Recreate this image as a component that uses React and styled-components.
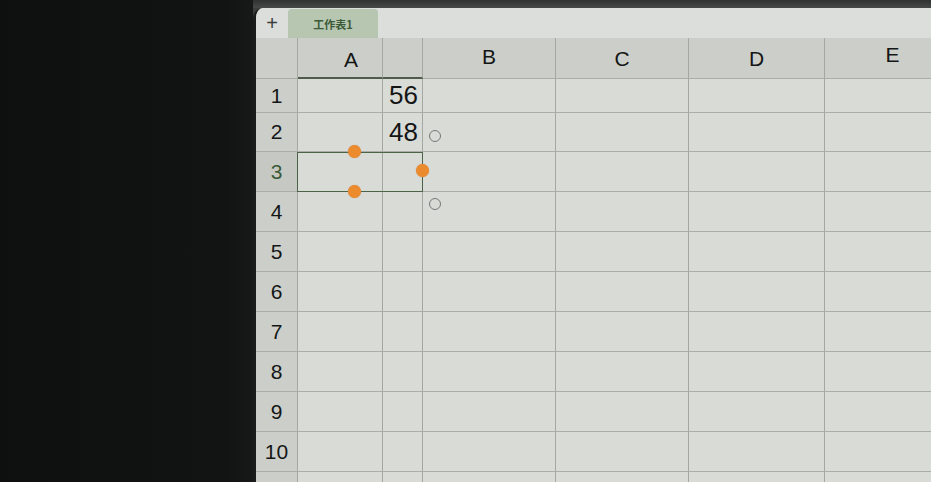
import React from "react";
import styled, { createGlobalStyle } from "styled-components";

const Global = createGlobalStyle`
  html, body { margin: 0; padding: 0; background: #101211; }
  body { font-family: "Liberation Sans", Arial, sans-serif; overflow: hidden; }
`;

const Page = styled.div`
  width: 931px;
  height: 482px;
  display: flex;
  background: #101211;
  overflow: hidden;
`;

const Bezel = styled.div`
  width: 253px;
  flex: none;
  background: linear-gradient(90deg, #0e100f 0%, #121413 90%, #171918 100%);
`;

const Device = styled.div`
  flex: 1;
  display: flex;
  flex-direction: column;
  background: #3a3d3b;
  min-width: 0;
`;

const TopStrip = styled.div`
  height: 8px;
  flex: none;
  background: linear-gradient(180deg, #2f3230 0%, #464947 100%);
`;

const Screen = styled.div`
  flex: 1;
  display: flex;
  flex-direction: column;
  background: #d9dbd7;
  border-top-left-radius: 10px;
  overflow: hidden;
  border-left: 3px solid #1a1c1b;
`;

const TabBar = styled.div`
  height: 29px;
  flex: none;
  display: flex;
  align-items: stretch;
  background: #dcdedb;
  padding-top: 1px;
`;

const AddButton = styled.div`
  width: 32px;
  display: flex;
  align-items: center;
  justify-content: center;
  font-size: 20px;
  color: #3b3d3c;
`;

const Tab = styled.div`
  width: 90px;
  display: flex;
  align-items: center;
  justify-content: center;
  background: #b6c6b1;
  border-radius: 4px 4px 0 0;
  color: #3c5a38;
  font-size: 11px;
  font-weight: 700;
  font-family: "Noto Sans CJK SC", "Liberation Sans", sans-serif;
`;

const GridWrap = styled.div`
  position: relative;
  flex: 1;
`;

const Grid = styled.div`
  display: grid;
  grid-template-columns: 42px 85px 40px 133px 133px 136px 136px;
  grid-template-rows: 41px 34px 39px repeat(9, 40px);
`;

const Cell = styled.div`
  border-right: 1.5px solid #a5a7a3;
  border-bottom: 1.5px solid #abada9;
  background: ${(p) => (p.$head ? "#ccceca" : "#d9dbd7")};
  display: flex;
  align-items: center;
  justify-content: ${(p) => (p.$right ? "flex-end" : "center")};
  padding: ${(p) => p.$pad || "0"};
  font-size: ${(p) => (p.$num ? "26px" : "21px")};
  color: ${(p) => (p.$active ? "#3b5a37" : "#141615")};
  box-sizing: border-box;
  ${(p) => (p.$mark ? "border-bottom: 2px solid #4f5c4c;" : "")}
  ${(p) => (p.$activeRow ? "background: #c6c8c4;" : "")}
`;

const Selection = styled.div`
  position: absolute;
  left: 41px;
  top: 114px;
  width: 126px;
  height: 40px;
  border: 1.5px solid #4c6348;
  box-sizing: border-box;
  pointer-events: none;
`;

const Handle = styled.div`
  position: absolute;
  width: 13px;
  height: 13px;
  border-radius: 50%;
  background: #ec8a2e;
  box-shadow: 0 0 1px rgba(180, 90, 20, 0.6);
  left: ${(p) => p.$x - 6.5}px;
  top: ${(p) => p.$y - 6.5}px;
`;

const Ring = styled.div`
  position: absolute;
  width: 10px;
  height: 10px;
  border-radius: 50%;
  border: 1.5px solid #757875;
  left: ${(p) => p.$x - 6.5}px;
  top: ${(p) => p.$y - 6.5}px;
`;

const cols = ["A", "", "B", "C", "D", "E"];
const data = { 1: "56", 2: "48" };

export default function App() {
  const rows = [1, 2, 3, 4, 5, 6, 7, 8, 9, 10, 11];
  return (
    <Page>
      <Global />
      <Bezel />
      <Device>
        <TopStrip />
        <Screen>
          <TabBar>
            <AddButton>+</AddButton>
            <Tab>工作表1</Tab>
          </TabBar>
          <GridWrap>
            <Grid>
              <Cell $head />
              {cols.map((c, i) => (
                <Cell
                  key={i}
                  $head
                  $mark={i < 2}
                  $pad={i === 0 ? "4px 0 0 22px" : i === 2 ? "0 0 2px 0" : i === 5 ? "0 0 6px 0" : "2px 0 0 0"}
                >
                  {c}
                </Cell>
              ))}
              {rows.map((r) => (
                <React.Fragment key={r}>
                  <Cell $head $active={r === 3} $activeRow={r === 3}>
                    {r <= 10 ? r : ""}
                  </Cell>
                  <Cell />
                  <Cell $right $num $pad="0 4px 0 0">
                    {data[r] || ""}
                  </Cell>
                  <Cell />
                  <Cell />
                  <Cell />
                  <Cell />
                </React.Fragment>
              ))}
            </Grid>
            <Selection />
            <Handle $x={98} $y={113} />
            <Handle $x={98} $y={153} />
            <Handle $x={166} $y={132} />
            <Ring $x={179} $y={98} />
            <Ring $x={179} $y={166} />
          </GridWrap>
        </Screen>
      </Device>
    </Page>
  );
}
